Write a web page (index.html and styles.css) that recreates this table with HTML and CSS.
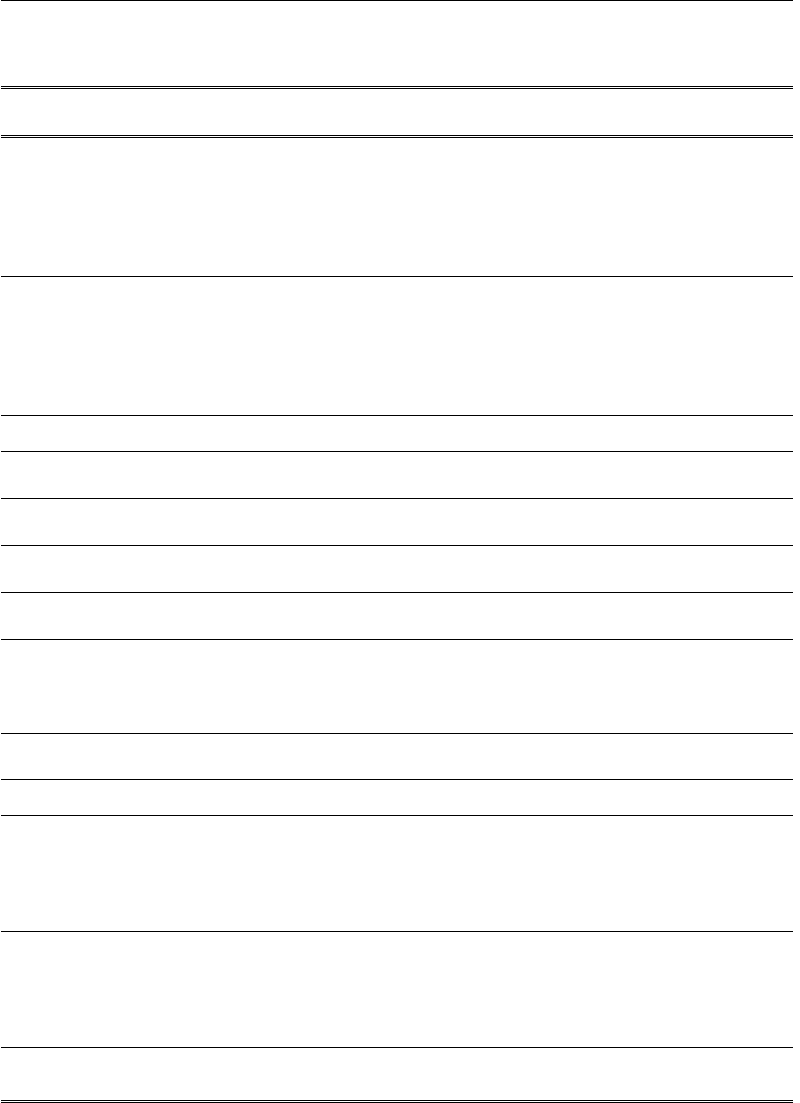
FILE: index.html
```html
<!DOCTYPE html>
<html lang="en">
<head>
<meta charset="utf-8">
<title>Document</title>
<link rel="stylesheet" href="styles.css">
</head>
<body>
<main class="sheet">
  <div class="row h85 dbl"></div>
  <div class="row h46 dbl"></div>
  <div class="row h138"></div>
  <div class="row h138"></div>
  <div class="row h35"></div>
  <div class="row h46"></div>
  <div class="row h46"></div>
  <div class="row h46"></div>
  <div class="row h46"></div>
  <div class="row h93"></div>
  <div class="row h45"></div>
  <div class="row h35"></div>
  <div class="row h115"></div>
  <div class="row h115"></div>
  <div class="row h52 dbl"></div>
</main>
</body>
</html>
```

FILE: styles.css
```css
html, body {
  margin: 0;
  padding: 0;
  background: #ffffff;
  font-family: "Liberation Serif", serif;
}

.sheet {
  width: 792px;
  margin-left: 1px;
  border-top: 1px solid #000;
  display: flex;
  flex-direction: column;
}

.row {
  border-bottom: 1px solid #000;
}

.row.dbl {
  border-bottom: 3px double #000;
}

.h35 { height: 35px; }
.h45 { height: 45px; }
.h46 { height: 46px; }
.h52 { height: 52px; }
.h85 { height: 85px; }
.h93 { height: 93px; }
.h115 { height: 115px; }
.h138 { height: 138px; }
```
